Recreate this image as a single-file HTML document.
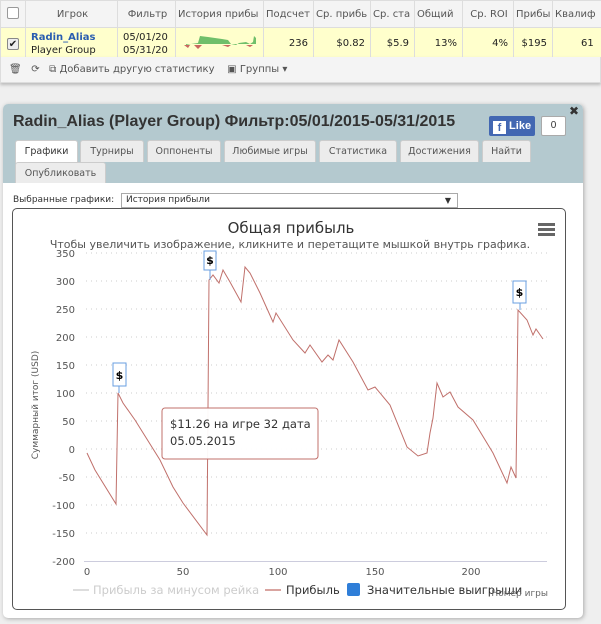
<!DOCTYPE html>
<html><head><meta charset="utf-8"><style>
*{box-sizing:border-box;margin:0;padding:0}
body{width:601px;height:624px;background:#efefef;font-family:"Liberation Sans","DejaVu Sans",sans-serif;position:relative;overflow:hidden;font-size:11px;color:#333}
.abs{position:absolute}
table{border-collapse:collapse;position:absolute;left:0;top:0;width:610px;table-layout:fixed}
td,th{border:1px solid #ddd;font-family:"DejaVu Sans",sans-serif;font-size:10px;height:28px;white-space:nowrap;overflow:hidden}
th{font-weight:normal;color:#555;background:#f4f4f4;height:27px;text-align:left;padding-left:2px}
tr.r td{background:#ffffcc;height:30px;color:#222;text-align:right;padding-right:5px}
.tab{position:absolute;height:22px;background:#ececec;border:1px solid #ccc;border-bottom:none;font-family:"DejaVu Sans",sans-serif;font-size:9.5px;color:#555;text-align:center;line-height:21px;border-radius:3px 3px 0 0;white-space:nowrap;overflow:hidden}
</style></head><body>
<table>
<colgroup><col style="width:25px"><col style="width:92px"><col style="width:58px"><col style="width:88px"><col style="width:50px"><col style="width:57px"><col style="width:44px"><col style="width:48px"><col style="width:51px"><col style="width:39px"><col style="width:58px"></colgroup>
<tr><th style="text-align:center;padding:0"><span style="display:inline-block;width:12px;height:12px;border:1px solid #999;border-radius:2px;background:#fff"></span></th><th style="text-align:center">Игрок</th><th style="text-align:center">Фильтр</th><th>История прибы</th><th>Подсчет</th><th>Ср. прибь</th><th>Ср. ста</th><th>Общий</th><th style="text-align:center">Ср. ROI</th><th>Прибы</th><th>Квалиф</th></tr>
<tr class="r"><td style="text-align:center;padding:0"><span style="display:inline-block;width:12px;height:12px;border:1px solid #888;border-radius:2px;background:#eee;font-size:10px;line-height:11px">✔</span></td>
<td style="text-align:left;padding-left:5px;line-height:13px"><b style="color:#2a5db0">Radin_Alias</b><br>Player Group</td>
<td style="text-align:left;padding-left:5px;line-height:13px">05/01/20<br>05/31/20</td>
<td style="padding:0"><svg width="88" height="28"><path d="M10 17 L15 16 L22 15 L24 8 L32 9 L46 11 L52 12 L55 16 L60 17 L63 15 L70 14 L74 16 L77 14 L78 8 L80 10 L80 16 L10 16Z" fill="#6fbf6a"/><path d="M8 17 L12 20 L14 17 L18 17 L22 21 L26 17Z M46 17 L52 19 L55 17Z M70 17 L74 19 L77 17Z" fill="#c9665f"/></svg></td>
<td>236</td><td>$0.82</td><td>$5.9</td><td>13%</td><td>4%</td><td>$195</td><td style="text-align:left;padding-left:28px">61</td></tr>
</table>
<div class="abs" style="left:0;top:57px;width:601px;height:26px;background:#f4f4f4;border:1px solid #ddd;border-top:none;box-shadow:0 2px 3px #bbb;font-family:'DejaVu Sans',sans-serif;font-size:10px;color:#555;line-height:26px;padding-left:8px">🗑&nbsp;&nbsp;&nbsp;⟳&nbsp;&nbsp;&nbsp;⧉ Добавить другую статистику&nbsp;&nbsp;&nbsp;&nbsp;▣ Группы ▾</div>

<div class="abs" style="left:3px;top:104px;width:580px;height:514px;background:#fff;border-radius:5px;box-shadow:1px 1px 4px #aaa;overflow:hidden">
 <div class="abs" style="left:0;top:0;width:580px;height:79px;background:#b4c9cf"></div>
 <div class="abs" style="left:10px;top:9px;font-size:16px;font-weight:bold;color:#333">Radin_Alias (Player Group) Фильтр:05/01/2015-05/31/2015</div>
 <div class="abs" style="left:486px;top:12px;width:46px;height:20px;background:#4267b2;border-radius:2px;color:#fff;font-weight:bold;font-size:11px;line-height:20px;padding-left:4px"><span style="display:inline-block;width:13px;height:13px;background:#fff;color:#4267b2;font-size:11px;line-height:14px;text-align:center;vertical-align:-2px">f</span> Like</div>
 <div class="abs" style="left:538px;top:12px;width:25px;height:20px;background:#fff;border:1px solid #aaa;border-radius:2px;text-align:center;line-height:18px;font-size:10px">0</div>
 <div class="abs" style="left:566px;top:0;font-size:12px;font-weight:bold">✖</div>
 <div class="tab" style="left:12px;top:36px;width:63px;background:#fff;color:#333;height:23px">Графики</div>
 <div class="tab" style="left:77px;top:36px;width:64px">Турниры</div>
 <div class="tab" style="left:144px;top:36px;width:74px">Оппоненты</div>
 <div class="tab" style="left:221px;top:36px;width:92px">Любимые игры</div>
 <div class="tab" style="left:316px;top:36px;width:78px">Статистика</div>
 <div class="tab" style="left:397px;top:36px;width:79px">Достижения</div>
 <div class="tab" style="left:479px;top:36px;width:49px">Найти</div>
 <div class="tab" style="left:12px;top:58px;width:91px;height:21px">Опубликовать</div>
 <div class="abs" style="left:10px;top:91px;font-family:'DejaVu Sans',sans-serif;font-size:9px">Выбранные графики:</div>
 <div class="abs" style="left:118px;top:89px;width:337px;height:15px;border:1px solid #aaa;font-family:'DejaVu Sans',sans-serif;font-size:9px;padding-left:4px;line-height:13px">История прибыли<span style="position:absolute;right:6px;font-size:8px">▼</span></div>
 <div class="abs" style="left:9px;top:104px;width:554px;height:402px;border:1px solid #555;border-radius:5px"></div>
</div>
<svg class="abs" style="left:0;top:0" width="601" height="624" font-family="DejaVu Sans, sans-serif">
 <text x="291" y="233" font-size="15" fill="#333" text-anchor="middle">Общая прибыль</text>
 <text x="290" y="248" font-size="11" fill="#555" text-anchor="middle">Чтобы увеличить изображение, кликните и перетащите мышкой внутрь графика.</text>
 <g fill="#666"><rect x="538" y="223" width="17" height="3"/><rect x="538" y="228" width="17" height="3"/><rect x="538" y="233" width="17" height="3"/></g>
 <g stroke="#ccc" stroke-dasharray="1,4">
  <path d="M86 253H547M86 281H547M86 309H547M86 337H547M86 365H547M86 393H547M86 421H547M86 449H547M86 477H547M86 505H547M86 533H547"/>
 </g>
 <path d="M84 561.5H547" stroke="#ccd" />
 <g font-size="10" fill="#555" text-anchor="end">
  <text x="75" y="257">350</text><text x="75" y="285">300</text><text x="75" y="313">250</text><text x="75" y="341">200</text><text x="75" y="369">150</text><text x="75" y="397">100</text><text x="75" y="425">50</text><text x="75" y="453">0</text><text x="75" y="481">-50</text><text x="75" y="509">-100</text><text x="75" y="537">-150</text><text x="75" y="565">-200</text>
 </g>
 <g font-size="10" fill="#555" text-anchor="middle"><text x="87" y="575">0</text><text x="183" y="575">50</text><text x="278" y="575">100</text><text x="375" y="575">150</text><text x="471" y="575">200</text></g>
 <text x="38" y="405" font-size="9" fill="#555" transform="rotate(-90 38 405)" text-anchor="middle">Суммарный итог (USD)</text>
 <path fill="none" stroke="#c0706b" stroke-width="1" d="M87 453L95 470L116 504L118 393L123 403L135 420L160 460L173 487L183 503L207 535L209 280L213 275L219 283L223 270L230 282L241 302L245 267L250 273L260 293L273 322L276 313L293 340L305 353L310 345L322 362L328 355L333 360L339 340L353 362L368 390L375 387L390 405L407 447L418 456L427 453L430 433L433 418L437 383L443 397L450 392L458 407L473 420L493 453L507 483L511 467L516 478L518 310L527 320L533 335L536 329L543 339"/>
 <g stroke="#6a9fe0" fill="#fff"><path d="M119 386V393M210 270V280M520 303V310"/><rect x="113" y="363" width="13" height="23"/><rect x="204" y="251" width="12" height="19"/><rect x="513" y="281" width="13" height="22"/></g>
 <g font-size="11" font-weight="bold" text-anchor="middle"><text x="119.5" y="379">$</text><text x="210" y="264">$</text><text x="519.5" y="296">$</text></g>
 <rect x="162" y="408" width="156" height="51" rx="3" fill="#fff" fill-opacity="0.95" stroke="#c0706b"/>
 <text x="170" y="428" font-size="11.5" fill="#333">$11.26 на игре 32 дата</text>
 <text x="170" y="445" font-size="11.5" fill="#333">05.05.2015</text>
 <path d="M73 590H89" stroke="#ddd" stroke-width="2"/>
 <text x="93" y="594" font-size="11.5" fill="#ccc">Прибыль за минусом рейка</text>
 <path d="M265 590H281" stroke="#d9a4a0" stroke-width="2"/>
 <text x="286" y="594" font-size="11.5" fill="#333">Прибыль</text>
 <rect x="347" y="583" width="13" height="13" rx="2" fill="#2f7ed8"/>
 <text x="367" y="594" font-size="11.5" fill="#333">Значительные выигрыши</text>
 <text x="548" y="596" font-size="9" fill="#666" text-anchor="end">Номер игры</text>
</svg>
</body></html>
